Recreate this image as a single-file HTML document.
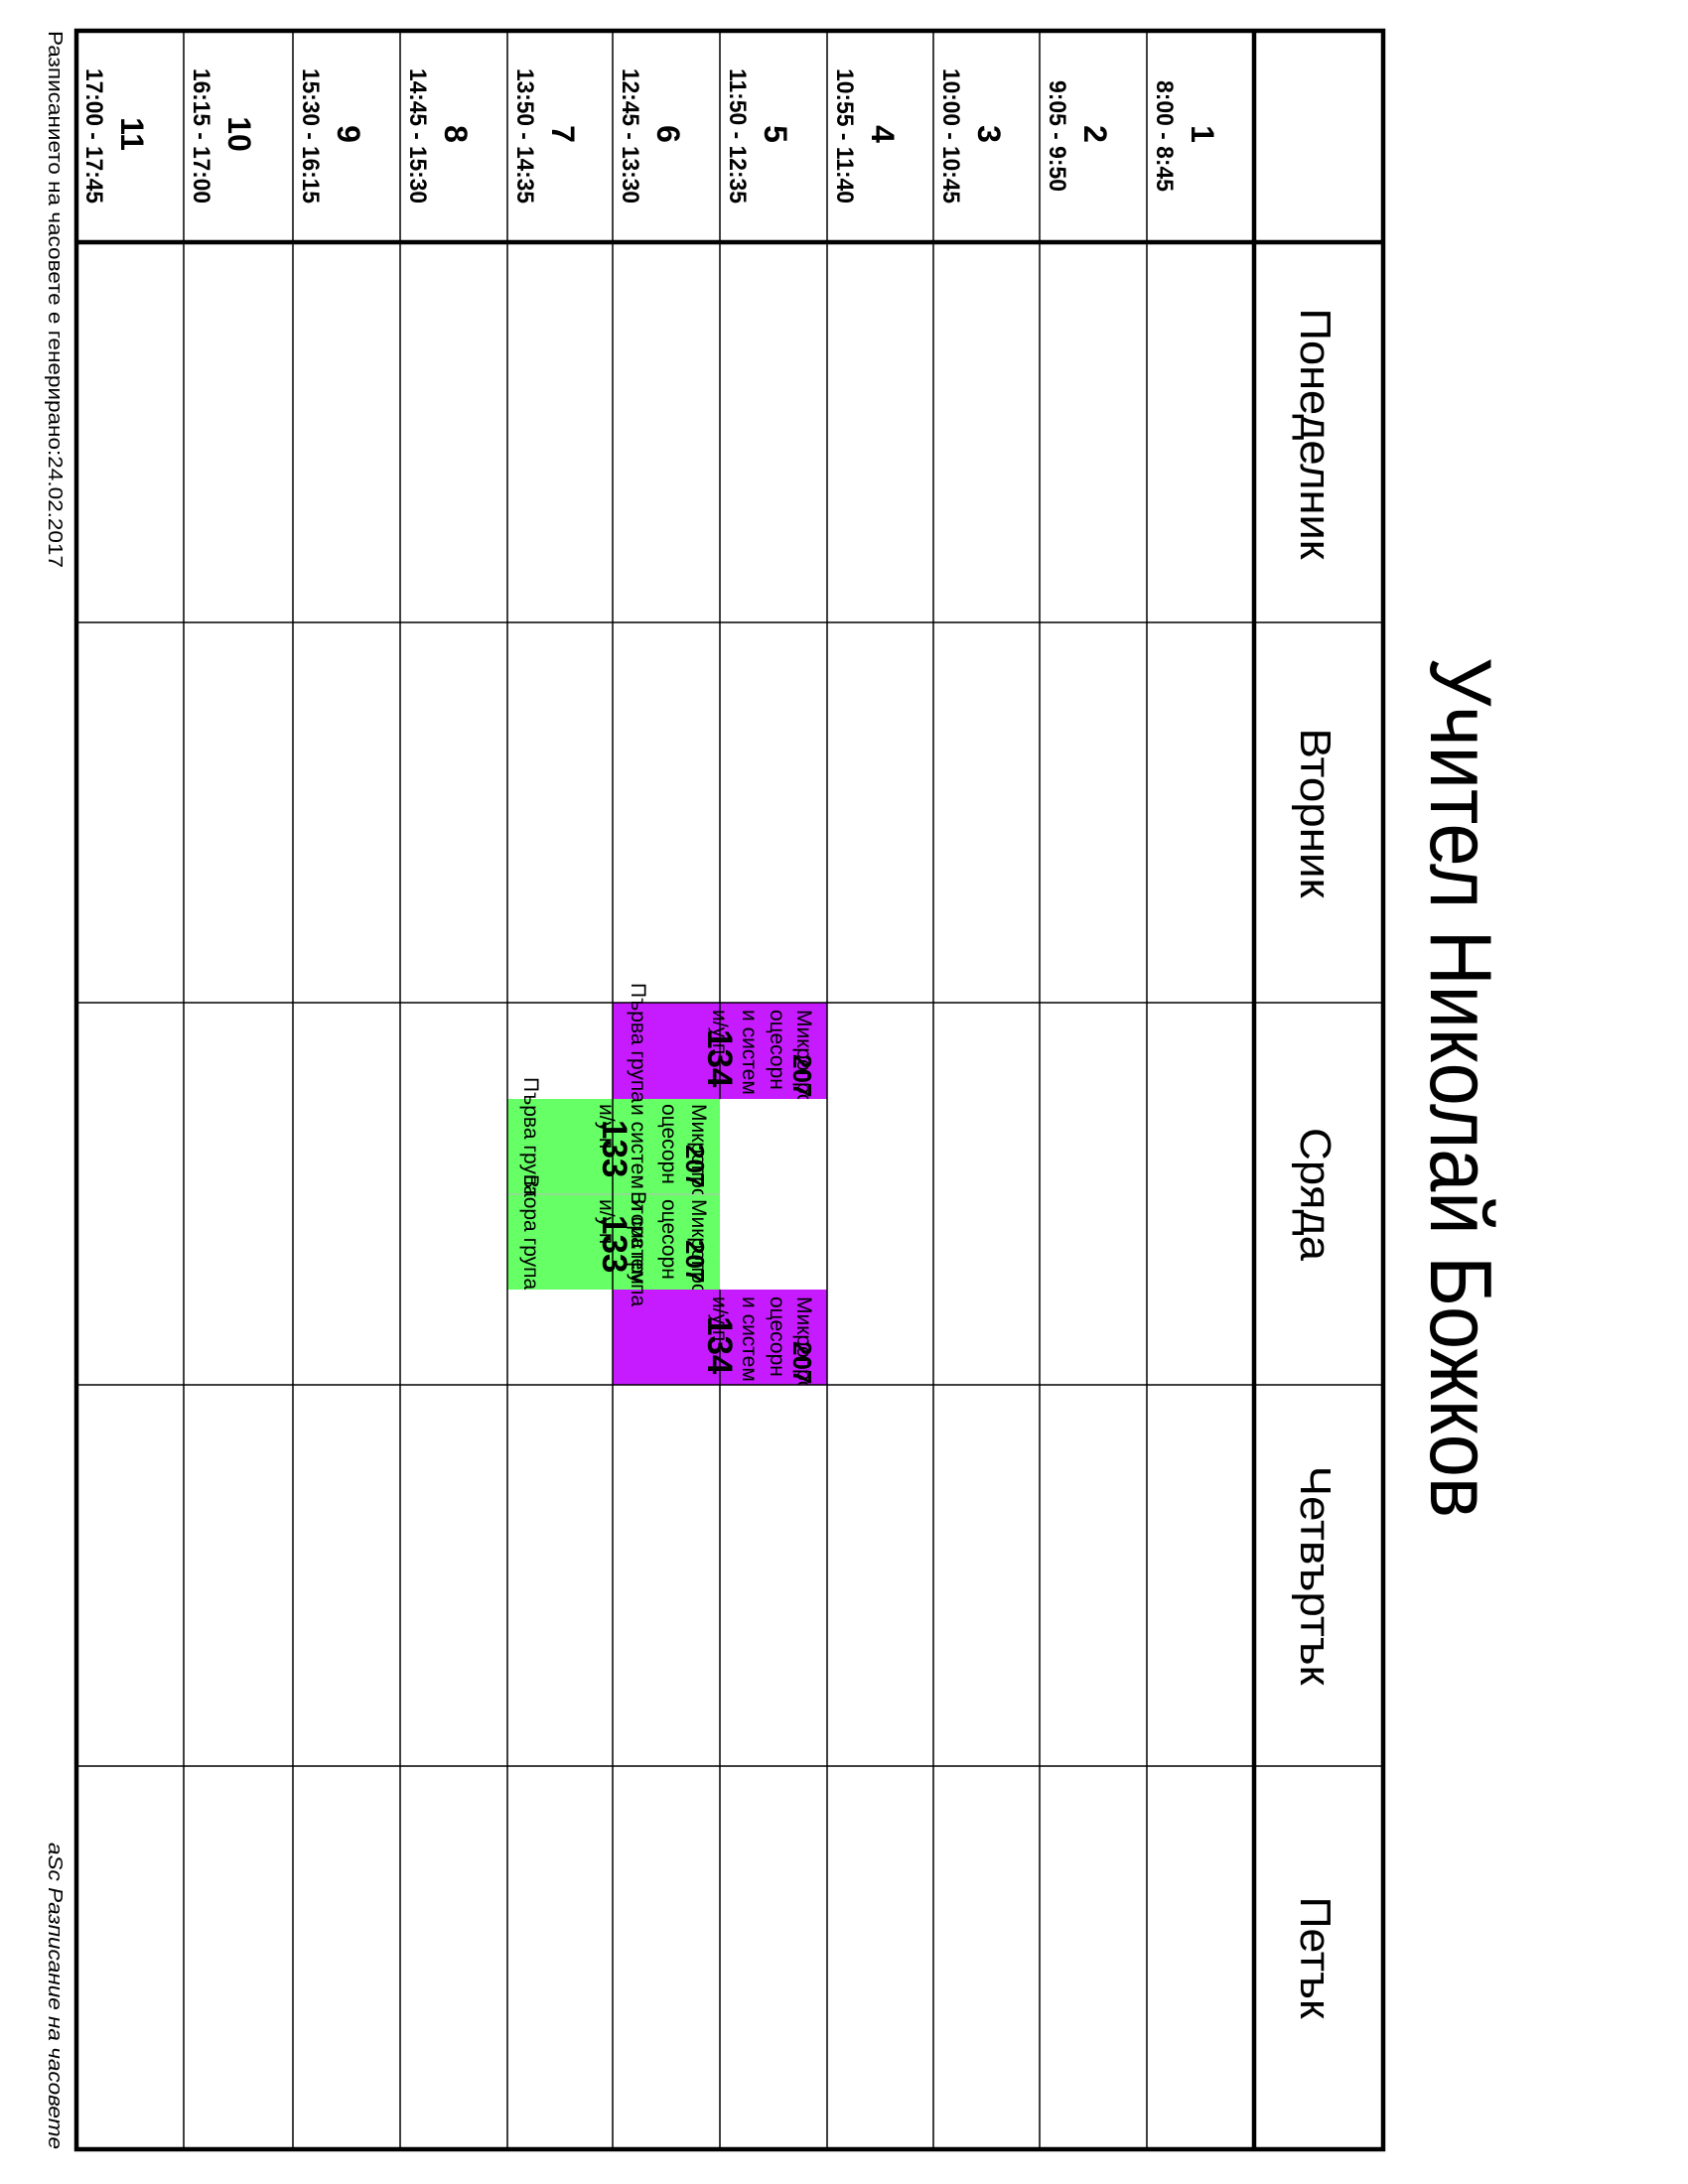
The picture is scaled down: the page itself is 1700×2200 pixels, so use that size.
<!DOCTYPE html>
<html><head><meta charset="utf-8"><style>
html,body{margin:0;padding:0;background:#fff;}
svg{display:block;}
text{font-family:"Liberation Sans",Arial,sans-serif;}
</style></head><body>
<svg width="1700" height="2200" viewBox="0 0 1700 2200" xmlns="http://www.w3.org/2000/svg">
<defs>
<clipPath id="cp1"><rect x="617" y="1010" width="216" height="97"/></clipPath>
<clipPath id="cp2"><rect x="617" y="1299" width="216" height="96"/></clipPath>
<clipPath id="cg1"><rect x="511" y="1107" width="214" height="96"/></clipPath>
<clipPath id="cg2"><rect x="511" y="1203" width="214" height="96"/></clipPath>
</defs>
<rect width="1700" height="2200" fill="#fff"/>

<!-- lesson blocks -->
<rect x="617" y="1010" width="216" height="97" fill="#c61bff"/>
<rect x="617" y="1299" width="216" height="96" fill="#c61bff"/>
<rect x="511" y="1107" width="214" height="192" fill="#66ff66"/>
<line x1="511" y1="1203" x2="725" y2="1203" stroke="#bbb" stroke-width="1"/>

<!-- thin grid lines -->
<g stroke="#000" stroke-width="1.5">
<line x1="1155" y1="31" x2="1155" y2="2165"/>
<line x1="1047" y1="31" x2="1047" y2="2165"/>
<line x1="940" y1="31" x2="940" y2="2165"/>
<line x1="833" y1="31" x2="833" y2="2165"/>
<line x1="725" y1="31" x2="725" y2="1107"/>
<line x1="725" y1="1299" x2="725" y2="2165"/>
<line x1="617" y1="31" x2="617" y2="2165"/>
<line x1="511" y1="31" x2="511" y2="2165"/>
<line x1="403" y1="31" x2="403" y2="2165"/>
<line x1="295" y1="31" x2="295" y2="2165"/>
<line x1="185" y1="31" x2="185" y2="2165"/>
<line x1="77" y1="627" x2="1393" y2="627"/>
<line x1="77" y1="1010" x2="1393" y2="1010"/>
<line x1="77" y1="1395" x2="1393" y2="1395"/>
<line x1="77" y1="1779" x2="1393" y2="1779"/>
</g>
<!-- thick lines -->
<g stroke="#000" stroke-width="4.5">
<rect x="77" y="31" width="1316" height="2134" fill="none"/>
<line x1="1263" y1="31" x2="1263" y2="2165"/>
<line x1="77" y1="244" x2="1393" y2="244"/>
</g>

<!-- title -->
<text transform="translate(1441,662) rotate(90)" font-size="88" textLength="867" lengthAdjust="spacingAndGlyphs">Учител Николай Божков</text>

<!-- days -->
<g font-size="44" text-anchor="middle">
<text transform="translate(1310,437) rotate(90)" textLength="253" lengthAdjust="spacingAndGlyphs">Понеделник</text>
<text transform="translate(1310,819) rotate(90)" textLength="171" lengthAdjust="spacingAndGlyphs">Вторник</text>
<text transform="translate(1310,1203) rotate(90)" textLength="134" lengthAdjust="spacingAndGlyphs">Сряда</text>
<text transform="translate(1310,1587) rotate(90)" textLength="221" lengthAdjust="spacingAndGlyphs">Четвъртък</text>
<text transform="translate(1310,1972) rotate(90)" textLength="123" lengthAdjust="spacingAndGlyphs">Петък</text>
</g>

<!-- periods -->
<g font-weight="bold" text-anchor="middle">
<text transform="translate(1200,135) rotate(90)" font-size="32">1</text>
<text transform="translate(1165,137) rotate(90)" font-size="24" textLength="112" lengthAdjust="spacingAndGlyphs">8:00 - 8:45</text>
<text transform="translate(1092,135) rotate(90)" font-size="32">2</text>
<text transform="translate(1057,137) rotate(90)" font-size="24" textLength="112" lengthAdjust="spacingAndGlyphs">9:05 - 9:50</text>
<text transform="translate(985,135) rotate(90)" font-size="32">3</text>
<text transform="translate(950,137) rotate(90)" font-size="24" textLength="136" lengthAdjust="spacingAndGlyphs">10:00 - 10:45</text>
<text transform="translate(878,135) rotate(90)" font-size="32">4</text>
<text transform="translate(843,137) rotate(90)" font-size="24" textLength="136" lengthAdjust="spacingAndGlyphs">10:55 - 11:40</text>
<text transform="translate(770,135) rotate(90)" font-size="32">5</text>
<text transform="translate(735,137) rotate(90)" font-size="24" textLength="136" lengthAdjust="spacingAndGlyphs">11:50 - 12:35</text>
<text transform="translate(662,135) rotate(90)" font-size="32">6</text>
<text transform="translate(627,137) rotate(90)" font-size="24" textLength="136" lengthAdjust="spacingAndGlyphs">12:45 - 13:30</text>
<text transform="translate(556,135) rotate(90)" font-size="32">7</text>
<text transform="translate(521,137) rotate(90)" font-size="24" textLength="136" lengthAdjust="spacingAndGlyphs">13:50 - 14:35</text>
<text transform="translate(448,135) rotate(90)" font-size="32">8</text>
<text transform="translate(413,137) rotate(90)" font-size="24" textLength="136" lengthAdjust="spacingAndGlyphs">14:45 - 15:30</text>
<text transform="translate(340,135) rotate(90)" font-size="32">9</text>
<text transform="translate(305,137) rotate(90)" font-size="24" textLength="136" lengthAdjust="spacingAndGlyphs">15:30 - 16:15</text>
<text transform="translate(230,135) rotate(90)" font-size="32">10</text>
<text transform="translate(195,137) rotate(90)" font-size="24" textLength="136" lengthAdjust="spacingAndGlyphs">16:15 - 17:00</text>
<text transform="translate(122,135) rotate(90)" font-size="32">11</text>
<text transform="translate(87,137) rotate(90)" font-size="24" textLength="136" lengthAdjust="spacingAndGlyphs">17:00 - 17:45</text>
</g>

<!-- purple lesson 1 -->
<g clip-path="url(#cp1)" font-size="21">
<text transform="translate(803,1017) rotate(90)">Микропроцесорни</text>
<text transform="translate(776,1017) rotate(90)">оцесорн</text>
<text transform="translate(748,1017) rotate(90)">и систем</text>
<text transform="translate(718,1017) rotate(90)">и/у п</text>
<text transform="translate(799,1062) rotate(90)" font-weight="bold" font-size="26">207</text>
<text transform="translate(713,1037) rotate(90)" font-weight="bold" font-size="35">134</text>
</g>
<text transform="translate(636,990) rotate(90)" font-size="21">Първа група</text>

<!-- purple lesson 2 -->
<g clip-path="url(#cp2)" font-size="21">
<text transform="translate(803,1306) rotate(90)">Микропроцесорни</text>
<text transform="translate(776,1306) rotate(90)">оцесорн</text>
<text transform="translate(748,1306) rotate(90)">и систем</text>
<text transform="translate(718,1306) rotate(90)">и/у п</text>
<text transform="translate(799,1351) rotate(90)" font-weight="bold" font-size="26">207</text>
<text transform="translate(713,1326) rotate(90)" font-weight="bold" font-size="35">134</text>
</g>
<text transform="translate(636,1200) rotate(90)" font-size="21">Втора група</text>

<!-- green lesson 1 -->
<g clip-path="url(#cg1)" font-size="21">
<text transform="translate(697,1112) rotate(90)">Микропроцесорни</text>
<text transform="translate(667,1112) rotate(90)">оцесорн</text>
<text transform="translate(636,1112) rotate(90)">и систем</text>
<text transform="translate(604,1112) rotate(90)">и/у п</text>
<text transform="translate(691,1153) rotate(90)" font-weight="bold" font-size="26">207</text>
<text transform="translate(607,1128) rotate(90)" font-weight="bold" font-size="35">133</text>
</g>
<!-- green lesson 2 -->
<g clip-path="url(#cg2)" font-size="21">
<text transform="translate(697,1208) rotate(90)">Микропроцесорни</text>
<text transform="translate(667,1208) rotate(90)">оцесорн</text>
<text transform="translate(636,1208) rotate(90)">и систем</text>
<text transform="translate(604,1208) rotate(90)">и/у п</text>
<text transform="translate(691,1249) rotate(90)" font-weight="bold" font-size="26">207</text>
<text transform="translate(607,1224) rotate(90)" font-weight="bold" font-size="35">133</text>
</g>
<text transform="translate(528,1085) rotate(90)" font-size="21">Първа група</text>
<text transform="translate(528,1183) rotate(90)" font-size="21">Втора група</text>

<!-- footer -->
<text transform="translate(49,31) rotate(90)" font-size="20" textLength="541" lengthAdjust="spacingAndGlyphs">Разписанието на часовете е генерирано:24.02.2017</text>
<text transform="translate(49,1856) rotate(90)" font-size="20" font-style="italic" textLength="309" lengthAdjust="spacingAndGlyphs">aSc Разписание на часовете</text>
</svg>
</body></html>
